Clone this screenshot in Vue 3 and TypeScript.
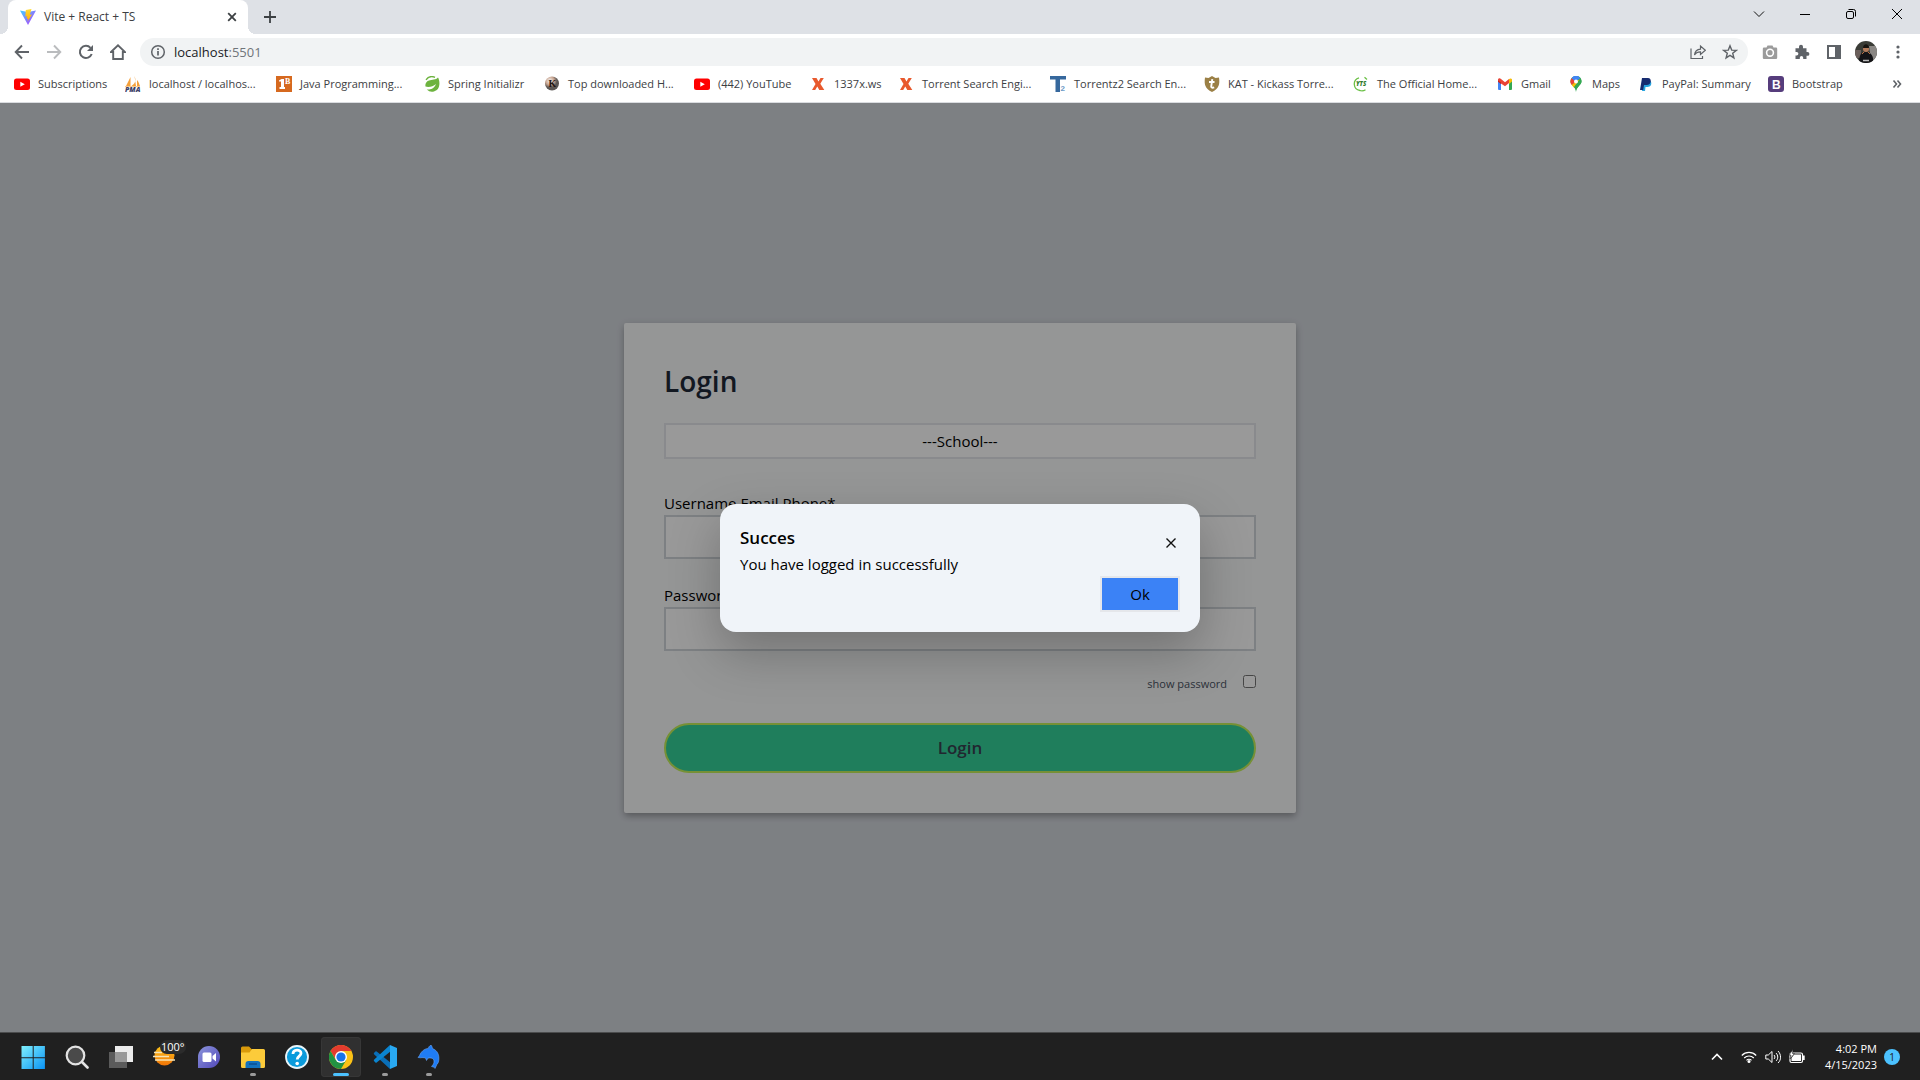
<script setup lang="ts">
import { ref } from 'vue'

interface Bookmark {
  icon: string
  title: string
  width: number
}

const bookmarks: Bookmark[] = [
  { icon: 'youtube', title: 'Subscriptions', width: 71 },
  { icon: 'pma', title: 'localhost / localhos...', width: 111 },
  { icon: 'java', title: 'Java Programming...', width: 108 },
  { icon: 'spring', title: 'Spring Initializr', width: 80 },
  { icon: 'k', title: 'Top downloaded H...', width: 110 },
  { icon: 'youtube', title: '(442) YouTube', width: 76 },
  { icon: 'x', title: '1337x.ws', width: 48 },
  { icon: 'x', title: 'Torrent Search Engi...', width: 112 },
  { icon: 't2', title: 'Torrentz2 Search En...', width: 114 },
  { icon: 'kat', title: 'KAT - Kickass Torre...', width: 109 },
  { icon: 'yts', title: 'The Official Home...', width: 104 },
  { icon: 'gmail', title: 'Gmail', width: 31 },
  { icon: 'maps', title: 'Maps', width: 30 },
  { icon: 'paypal', title: 'PayPal: Summary', width: 90 },
  { icon: 'bootstrap', title: 'Bootstrap', width: 52 },
]

const school = ref('')
const username = ref('')
const password = ref('')
const showPassword = ref(false)
const dialogOpen = ref(true)
</script>

<template>
  <div class="desktop">
    <header class="tabstrip">
      <div class="tab">
        <svg class="i16" viewBox="0 0 16 16">
          <defs>
            <linearGradient id="vite" x1="0" y1="0" x2="1" y2="1"><stop offset="0" stop-color="#41d1ff" /><stop offset="1" stop-color="#bd34fe" /></linearGradient>
            <linearGradient id="bolt" x1="0" y1="0" x2="0" y2="1"><stop offset="0" stop-color="#ffdd35" /><stop offset="1" stop-color="#ffa800" /></linearGradient>
          </defs>
          <path d="M0 1.500 8 3 16 1.500 8 16Z" fill="url(#vite)" />
          <path d="M11.500 0 5.800 1 5.400 7.500 7.200 7.200 6.600 10 8.200 9.600 7.600 12.500 12 5.400 9.800 5.800Z" fill="url(#bolt)" />
        </svg>
        <span class="tab-title">Vite + React + TS</span>
        <button class="plain" aria-label="Close tab">
          <svg class="i16" viewBox="0 0 16 16"><path d="M4.200 4.200 11.800 11.800M11.800 4.200 4.200 11.800" stroke="#3c4043" stroke-width="1.800" /></svg>
        </button>
      </div>
      <button class="plain new-tab" aria-label="New tab">
        <svg class="i16" viewBox="0 0 16 16"><path d="M8 2v12M2 8h12" stroke="#3c4043" stroke-width="1.800" /></svg>
      </button>
      <div class="window-controls">
        <button class="plain" aria-label="Search tabs"><svg class="i16" viewBox="0 0 16 16"><path d="M3 5.500 8 10.500 13 5.500" fill="none" stroke="#111" /></svg></button>
        <button class="plain" aria-label="Minimize"><svg class="i16" viewBox="0 0 16 16"><path d="M3 8.500h10" stroke="#000" /></svg></button>
        <button class="plain" aria-label="Restore"><svg class="i16" viewBox="0 0 16 16"><rect x="3.500" y="5.500" width="7" height="7" rx="1.500" fill="none" stroke="#000" /><path d="M5.500 3.500h5a2 2 0 0 1 2 2v5" fill="none" stroke="#000" /></svg></button>
        <button class="plain" aria-label="Close window"><svg class="i16" viewBox="0 0 16 16"><path d="M3 3 13 13M13 3 3 13" stroke="#000" /></svg></button>
      </div>
    </header>

    <nav class="toolbar">
      <button class="plain tool" aria-label="Back"><svg class="i16" viewBox="0 0 16 16"><path d="M15 8H2M8 1.500 1.700 8 8 14.500" fill="none" stroke="#5f6368" stroke-width="1.900" /></svg></button>
      <button class="plain tool" aria-label="Forward"><svg class="i16" viewBox="0 0 16 16"><path d="M1 8h13M8 1.500 14.300 8 8 14.500" fill="none" stroke="#babcbe" stroke-width="1.900" /></svg></button>
      <button class="plain tool" aria-label="Reload"><svg class="i16" viewBox="0 0 16 16"><path d="M13.700 10A6.100 6.100 0 1 1 12.500 3.800" fill="none" stroke="#5f6368" stroke-width="2" /><path d="M15 1v6H9Z" fill="#5f6368" /></svg></button>
      <button class="plain tool" aria-label="Home"><svg class="i16" viewBox="0 0 16 16"><path d="M1 8 8 1.300 15 8H12.800V15H3.200V8Z" fill="none" stroke="#5f6368" stroke-width="1.900" /></svg></button>
      <div class="omnibox">
        <svg class="i16" viewBox="0 0 16 16"><circle cx="8" cy="8" r="6.300" fill="none" stroke="#5f6368" stroke-width="1.500" /><path d="M8 7v4.500M8 4.200v1.800" stroke="#5f6368" stroke-width="1.700" /></svg>
        <span class="url">localhost<span class="port">:5501</span></span>
        <button class="plain tool" aria-label="Share"><svg class="i16" viewBox="0 0 16 16"><path d="M1 4.500V14.500H12.500V12M4.500 11C5 7 7 5.500 10.500 5.200V2L15.300 6.300 10.500 10.500V7.800C7.500 8 5.500 9 4.500 11Z" fill="none" stroke="#5f6368" stroke-width="1.200" /></svg></button>
        <button class="plain tool" aria-label="Bookmark this page"><svg class="i16" viewBox="0 0 16 16"><path d="M8 1.800 9.700 6.100 14.300 6.400 10.700 9.300 11.900 13.900 8 11.400 4.100 13.900 5.300 9.300 1.700 6.400 6.300 6.100Z" fill="none" stroke="#5f6368" stroke-width="1.400" /></svg></button>
      </div>
      <button class="plain tool" aria-label="Camera extension"><svg class="i16" viewBox="0 0 16 16"><path d="M5.500 1.500h5l1 2h2.500a1.200 1.200 0 0 1 1.200 1.200v9a1.200 1.200 0 0 1-1.200 1.200H2a1.200 1.200 0 0 1-1.200-1.200v-9A1.200 1.200 0 0 1 2 3.500h2.500Z" fill="#9b9b9b" /><circle cx="8" cy="8.700" r="3.400" fill="#9b9b9b" stroke="#fff" stroke-width="1.600" /></svg></button>
      <button class="plain tool" aria-label="Extensions"><svg class="i16" viewBox="0 0 16 16"><path d="M1.500 4.200H5V2.700a2 2 0 0 1 4 0v1.500h3.500V8H13.500a1.900 1.900 0 0 1 0 3.800H12.500V15H9.200V13.800a1.700 1.700 0 0 0-3.400 0V15H1.500V11.500H2.700a1.700 1.700 0 0 0 0-3.400H1.500Z" fill="#5f6368" /></svg></button>
      <button class="plain tool" aria-label="Side panel"><svg class="i16" viewBox="0 0 16 16"><path d="M1 1h14v14H1ZM3 3v10h6V3Z" fill="#5f6368" fill-rule="evenodd" /></svg></button>
      <button class="plain tool" aria-label="Profile">
        <svg class="avatar" viewBox="0 0 22 22"><defs><clipPath id="face"><circle cx="11" cy="11" r="11" /></clipPath></defs><g clip-path="url(#face)"><path d="M0 0h22v22H0Z" fill="#3a3c36" /><path d="M14 5h8v14h-6Z" fill="#8a8784" /><path d="M0 9h6v8H0Z" fill="#6b5f5b" /><path d="M4 22c0-8 2-11 7-11s8 4 7 11Z" fill="#141417" /><circle cx="11" cy="8" r="3" fill="#b47c5b" /><path d="M8 7c0-5 6-5 6 0Z" fill="#17130f" /><path d="M7 13l2-2M15 13l-2-2" stroke="#bd7145" /><path d="M8 19.500h6" stroke="#bbb" stroke-width="1.500" /></g></svg>
      </button>
      <button class="plain tool" aria-label="Menu"><svg class="i16" viewBox="0 0 16 16"><circle cx="8" cy="3" r="1.600" fill="#5f6368" /><circle cx="8" cy="8" r="1.600" fill="#5f6368" /><circle cx="8" cy="13" r="1.600" fill="#5f6368" /></svg></button>
    </nav>

    <nav class="bookmarks">
      <a v-for="(b, n) in bookmarks" :key="n" class="bookmark" href="#">
        <svg class="i16" viewBox="0 0 16 16">
          <template v-if="b.icon === 'youtube'"><rect y="2.500" width="16" height="11.500" rx="2.500" fill="#f00" /><path d="M6.300 5.700 10.800 8.200 6.300 10.700Z" fill="#fff" /></template>
          <template v-else-if="b.icon === 'pma'"><path d="M5.500 1 1 10h4.500ZM9.500 0C11 4 11 7 6.500 10H11ZM12 4c2 2 2 4 3 6h-3Z" fill="#f5a03a" /><path d="M0 10.500h15" stroke="#f9c98d" /><text x="0" y="15.500" class="pma-text">PMA</text></template>
          <template v-else-if="b.icon === 'java'"><rect width="16" height="16" fill="#d6691f" /><path d="M3 4.500 5.500 3H8v8h1v2H3.500v-2H5V5.500H3Z" fill="#fff" /><text x="9" y="8" class="java-text">B</text></template>
          <template v-else-if="b.icon === 'spring'"><path d="M14 1.500C12 4 8 3.500 5 4.600A5 5 0 0 0 1.500 10.500C4 11.500 9 11 12 8 10 13 5.500 14 2.800 13.500A7.300 7.300 0 0 0 15.300 9C15.700 6 15 3 14 1.500Z" fill="#6db33f" /><path d="M2 3.800A7.500 7.500 0 0 1 11 1.300" fill="none" stroke="#6db33f" stroke-width="1.300" /></template>
          <template v-else-if="b.icon === 'k'"><defs><radialGradient id="kball" cx=".35" cy=".3"><stop offset="0" stop-color="#f3f3f3" /><stop offset=".6" stop-color="#c9a590" /><stop offset="1" stop-color="#5b5755" /></radialGradient></defs><circle cx="8" cy="7.500" r="7" fill="url(#kball)" /><text x="4.500" y="11" class="k-text">K</text></template>
          <template v-else-if="b.icon === 'x'"><path d="M2 2h4.500l2 3.500L10.500 2h3.300l-3.500 5.700 4 6.300h-5L7.300 10.500 5.200 14H2l3.500-6Z" fill="#e8592d" /></template>
          <template v-else-if="b.icon === 't2'"><path d="M0 0h16v3.500h-6V16H5.500V3.500H0Z" fill="#36689d" /><rect x="10" y="7" width="6" height="9" fill="#fff" /><text x="10.500" y="15" class="t2-text">2</text></template>
          <template v-else-if="b.icon === 'kat'"><path d="M1 1.500 4.500 2 8 0l3.500 2L15 1.500c1 7 0 11-7 14.500C1 12.500 0 8.500 1 1.500Z" fill="#9b8046" /><path d="M8.300 3.200 7.200 10.500c0 1.300 1 1.500 3 .8M5 6h5.500" fill="none" stroke="#fff" stroke-width="1.900" /></template>
          <template v-else-if="b.icon === 'yts'"><path d="M6 1.800A6.500 6.500 0 0 0 7 14.500c2 .6 4 .2 5.500-.8M11.500 1.300 14 3.500" fill="none" stroke="#6ac045" stroke-width="1.300" /><text x="3" y="10" class="yts-text">YTS</text></template>
          <template v-else-if="b.icon === 'gmail'"><path d="M1 3.500h3V14H2a1 1 0 0 1-1-1Z" fill="#4285f4" /><path d="M12 3.500h3V13a1 1 0 0 1-1 1h-2Z" fill="#34a853" /><path d="M1 4C1 2 3 2 4 3l4 3.200L12 3v4L8 10.200 1 5.500Z" fill="#ea4335" /><path d="M12 3c1.500-1 3-.5 3 1v1.500L12 8Z" fill="#fbbc04" /><path d="M1 4.500 4 6.500V8L1 5.800Z" fill="#c5221f" /></template>
          <template v-else-if="b.icon === 'maps'"><path d="M8 0C4.500 0 2.500 2.700 2.500 5.500 2.500 9 8 11 8 16c0-5 5.500-7 5.500-10.500S11.500 0 8 0Z" fill="#34a853" /><path d="M3.800 2A5.500 5.500 0 0 0 3.700 9L8 5.500Z" fill="#ea4335" /><path d="M3.800 2A5.500 5.500 0 0 1 10.500.6L7 5.500Z" fill="#4285f4" /><path d="M3.700 9 6 11.700 12.500 3 8 5.500Z" fill="#fbbc04" /><path d="M10.500.6C13 2 13.500 4 13.500 5.500 13.500 9 8 11 8 16 8 13 7 12 6 11l6-8Z" fill="#34a853" /><path d="M3.800 2A5.500 5.500 0 0 1 12.300 2L8 5.500Z" fill="#4285f4" /><circle cx="8" cy="5.500" r="2" fill="#fff" /></template>
          <template v-else-if="b.icon === 'paypal'"><path d="M5.500 5h7c2 3 0 6-3 6H7.500L7 15H4Z" fill="#27a4df" /><path d="M4 2h6c4 0 4 7-1.500 7H6l-.8 5H2Z" fill="#172c70" /></template>
          <template v-else><rect width="16" height="16" rx="3" fill="#563d7c" /><text x="4" y="12.500" class="bs-text">B</text></template>
        </svg>
        <span class="bookmark-title" :style="{ width: b.width + 'px' }">{{ b.title }}</span>
      </a>
      <button class="plain more" aria-label="More bookmarks"><svg class="i16" viewBox="0 0 16 16"><path d="M4.500 4.500 7.500 8 4.500 11.500M8.500 4.500 11.500 8 8.500 11.500" fill="none" stroke="#5f6368" stroke-width="1.600" /></svg></button>
    </nav>

    <main class="page">
      <form class="card" @submit.prevent="dialogOpen = true">
        <h1>Login</h1>
        <select v-model="school" class="school" aria-label="School">
          <option value="">---School---</option>
        </select>
        <div class="field">
          <label for="username">Username Email Phone*</label>
          <input id="username" v-model="username" type="text">
        </div>
        <div class="field">
          <label for="password">Password*</label>
          <input id="password" v-model="password" :type="showPassword ? 'text' : 'password'">
        </div>
        <div class="show-row">
          <label for="show">show password</label>
          <input id="show" v-model="showPassword" type="checkbox">
        </div>
        <button class="submit" type="submit">Login</button>
      </form>

      <div v-if="dialogOpen" class="overlay">
        <section class="dialog" role="dialog" aria-labelledby="dialog-title">
          <div class="dialog-head">
            <h2 id="dialog-title">Succes</h2>
            <button class="plain close" aria-label="Close" @click="dialogOpen = false">
              <svg class="i16" viewBox="0 0 16 16"><path d="M3.500 3.500 12.500 12.500M12.500 3.500 3.500 12.500" stroke="#111" stroke-width="1.400" /></svg>
            </button>
          </div>
          <p>You have logged in successfully</p>
          <button class="ok" @click="dialogOpen = false">Ok</button>
        </section>
      </div>
    </main>

    <footer class="taskbar">
      <div class="apps">
        <button class="plain app" aria-label="Start">
          <svg class="i24" viewBox="0 0 24 24"><defs><linearGradient id="win" x1="0" y1="0" x2="1" y2="1"><stop offset="0" stop-color="#7ff0fd" /><stop offset="1" stop-color="#0a93f5" /></linearGradient></defs><path d="M.5 1h11.200v11.200H.5ZM12.700 1h11.200v11.200H12.700ZM.5 13.200h11.200V24H.5ZM12.700 13.200h11.200V24H12.700Z" fill="url(#win)" /></svg>
        </button>
        <button class="plain app" aria-label="Search"><svg class="i24" viewBox="0 0 24 24"><circle cx="10.500" cy="10.500" r="8.800" fill="#4a4a4a" stroke="#e3e3e3" stroke-width="2.200" /><path d="M17 17 22.500 22.500" stroke="#e3e3e3" stroke-width="2.600" stroke-linecap="round" /></svg></button>
        <button class="plain app" aria-label="Task view"><svg class="i24" viewBox="0 0 24 24"><path d="M6 1h18v16H6Z" fill="#ececec" /><path d="M0 7h18v16H0Z" fill="#5b5b5b" /><path d="M6 7h12v10H6Z" fill="#999" /></svg></button>
        <button class="plain app" aria-label="Weather">
          <svg class="i24" viewBox="0 0 24 24"><defs><linearGradient id="sun" x1="0" y1="0" x2="0" y2="1"><stop offset="0" stop-color="#ffc61a" /><stop offset="1" stop-color="#f07407" /></linearGradient></defs><circle cx="11.500" cy="10.500" r="10" fill="url(#sun)" /><path d="M0 11.500h16M2 15h20M1 7.500h8" stroke="#f6e3b5" stroke-width="1.600" /></svg>
          <span class="temp">100°</span>
        </button>
        <button class="plain app" aria-label="Chat"><svg class="i24" viewBox="0 0 24 24"><defs><linearGradient id="chat" x1="0" y1="0" x2="1" y2="1"><stop offset="0" stop-color="#8c95dc" /><stop offset="1" stop-color="#5147b8" /></linearGradient></defs><path d="M12 1A11 11 0 1 1 12 23H1V12A11 11 0 0 1 12 1Z" fill="url(#chat)" /><rect x="5.500" y="7.500" width="9" height="9.500" rx="1.500" fill="#fff" /><path d="M15.500 11 19 8v8.500L15.500 13.500Z" fill="#fff" /></svg></button>
        <button class="plain app running" aria-label="File Explorer"><svg class="i24" viewBox="0 0 24 24"><path d="M0 3a1.500 1.500 0 0 1 1.500-1.500H8L11 4.500V9H0Z" fill="#d99a0b" /><path d="M0 7.500h8.500L11 4h11.500A1.500 1.500 0 0 1 24 5.500v16A1.500 1.500 0 0 1 22.500 23h-21A1.500 1.500 0 0 1 0 21.500Z" fill="#fccb3a" /><path d="M4.500 23v-4a3 3 0 0 1 3-3h9a3 3 0 0 1 3 3v4Z" fill="#1372bd" /><path d="M8 19h8" stroke="#0c4f91" stroke-width="1.500" /></svg></button>
        <button class="plain app" aria-label="Help"><svg class="i24" viewBox="0 0 24 24"><circle cx="12" cy="12" r="11" fill="#0a9bdc" stroke="#e9f5fa" stroke-width="1.800" /><path d="M8 9c0-5 8-5 8-.8 0 3-3.800 2.800-3.800 6.300" fill="none" stroke="#fff" stroke-width="2.800" /><circle cx="12.200" cy="18.500" r="1.800" fill="#fff" /></svg></button>
        <button class="plain app active" aria-label="Chrome"><svg class="i24" viewBox="0 0 24 24"><circle cx="12" cy="12" r="12" fill="#fbc116" /><path d="M12 6h10.400A12 12 0 0 0 1.600 6L7 15Z" fill="#e33b2e" /><path d="M1.600 6A12 12 0 0 0 12 24l5.200-9-10.400 0Z" fill="#229342" /><circle cx="12" cy="12" r="6" fill="#fff" /><circle cx="12" cy="12" r="4.600" fill="#1a73e8" /></svg></button>
        <button class="plain app running" aria-label="Visual Studio Code"><svg class="i24" viewBox="0 0 24 24"><path d="M17 24 1 9.200a1 1 0 0 1 0-1.200L2.400 6.600a1 1 0 0 1 1.300 0L18 18Z" fill="#0a6fb8" /><path d="M17 0 1 14.800a1 1 0 0 0 0 1.200L2.400 17.400a1 1 0 0 0 1.300 0L18 6Z" fill="#0b84cf" /><path d="M17 0 24 3v18l-7 3Z" fill="#29a9f2" /></svg></button>
        <button class="plain app running" aria-label="MySQL tool"><svg class="i24" viewBox="0 0 24 24"><path d="M14 0c.8 1 1.300 2 1.500 3.500 5 2 7.200 6.500 6.200 12.500-.3 1.500-.8 2.500-1.700 3.300L18 23.500l-.8-1.200-2.700-.8 2-2.500c1-2.500.5-4.500-1-5.500-1.500-.8-3.500-.6-4.500-.3L9.500 15.500 8.500 13C6.500 12.500 4.500 12.600 3.500 12.800L1 12.500l1.500-2C4 7 6.500 4 11.500 3.200 11.500 2 12.500.8 14 0Z" fill="#1f7cf5" stroke="#79b3ff" stroke-width=".5" /></svg></button>
      </div>
      <div class="tray">
        <svg class="i16" viewBox="0 0 16 16"><path d="M3 10.500 8 5.500 13 10.500" fill="none" stroke="#fff" stroke-width="1.600" /></svg>
        <div class="status">
          <svg class="i16" viewBox="0 0 16 16"><path d="M.8 6.500a10 10 0 0 1 14.400 0M3.200 9a6.800 6.800 0 0 1 9.600 0M5.500 11.300a3.500 3.500 0 0 1 5 0" fill="none" stroke="#fff" stroke-width="1.200" /><circle cx="8" cy="12.500" r="1.500" fill="#fff" /></svg>
          <svg class="i16" viewBox="0 0 16 16"><path d="M.8 6h2.500L7 2.500v11L3.300 10H.8Z" fill="none" stroke="#fff" /><path d="M9 6c1.200 1.200 1.200 3 0 4M11 4c2.300 2.300 2.300 6 0 8M13 2c3.400 3.500 3.400 9 0 12" fill="none" stroke="#fff" /></svg>
          <svg class="i16" viewBox="0 0 16 16"><rect x="1" y="4" width="12.500" height="9.500" rx="1.500" fill="none" stroke="#fff" stroke-width="1.200" /><path d="M5 5.500h7V12H2.500V9Z" fill="#fff" /><path d="M14.800 6.500v4.500" stroke="#fff" stroke-width="1.800" /><path d="M4 .5 0 6h2l-1 4 4.500-5.500H3.500Z" fill="#fff" stroke="#202020" stroke-width=".6" /></svg>
        </div>
        <div class="clock"><span>4:02 PM</span><span>4/15/2023</span></div>
        <span class="badge">1</span>
      </div>
    </footer>
  </div>
</template>

<style>
body {
  margin: 0;
}
</style>

<style scoped>
* {
  box-sizing: border-box;
}

.desktop {
  min-height: 100vh;
  display: flex;
  flex-direction: column;
  background: #fff;
  font-family: "Open Sans", "Noto Sans", sans-serif;
  font-size: 15px;
  color: #000;
}

svg {
  display: block;
  flex: none;
}

.i16 {
  width: 16px;
  height: 16px;
}

.i24 {
  width: 24px;
  height: 24px;
}

.plain {
  display: flex;
  align-items: center;
  justify-content: center;
  border: 0;
  padding: 0;
  background: none;
  font: inherit;
}

.tabstrip {
  display: flex;
  height: 34px;
  padding-left: 8px;
  background: #dee1e6;
}

.tab {
  position: relative;
  display: flex;
  align-items: center;
  gap: 8px;
  width: 240px;
  padding: 0 8px 0 12px;
  border-radius: 8px 8px 0 0;
  background: #fff;
}

.tab::before,
.tab::after {
  content: "";
  position: absolute;
  bottom: 0;
  width: 8px;
  height: 8px;
}

.tab::before {
  left: -8px;
  background: radial-gradient(circle at 0 0, transparent 8px, #fff 8px);
}

.tab::after {
  right: -8px;
  background: radial-gradient(circle at 100% 0, transparent 8px, #fff 8px);
}

.tab-title {
  flex: 1;
  padding-bottom: 2px;
  font-size: 12px;
  color: #3c4043;
}

.new-tab {
  margin-left: 14px;
}

.window-controls {
  display: flex;
  height: 28px;
  margin-left: auto;
}

.window-controls .plain {
  width: 46px;
}

.toolbar {
  display: flex;
  align-items: center;
  height: 36px;
  padding: 0 6px;
}

.tool {
  width: 32px;
  height: 28px;
}

.avatar {
  width: 22px;
  height: 22px;
}

.omnibox {
  display: flex;
  align-items: center;
  flex: 1;
  height: 28px;
  margin: 0 6px;
  padding: 0 2px 0 10px;
  border-radius: 14px;
  background: #f1f3f4;
}

.url {
  flex: 1;
  margin-left: 8px;
  font-size: 13px;
  color: #202124;
}

.port {
  color: #70757a;
}

.bookmarks {
  display: flex;
  align-items: center;
  gap: 16px;
  height: 33px;
  padding: 0 15px 4px 14px;
  border-bottom: 1px solid #dadce0;
}

.bookmark {
  display: flex;
  align-items: center;
  gap: 8px;
  color: #3c4043;
  font-size: 11px;
  text-decoration: none;
}

.bookmark-title {
  padding-bottom: 2px;
  white-space: nowrap;
}

.more {
  margin-left: auto;
}

.pma-text {
  font: italic 800 7px "Open Sans", sans-serif;
  fill: #3c3f67;
}

.java-text {
  font: 700 8px "Liberation Serif", serif;
  fill: #fff;
}

.k-text {
  font: 700 10px "Liberation Serif", serif;
  fill: #221512;
}

.t2-text {
  font: 700 8px "Liberation Sans", sans-serif;
  fill: #6c9ac6;
}

.yts-text {
  font: italic 800 6px "Open Sans", sans-serif;
  fill: #2f7c2c;
}

.bs-text {
  font: 700 12px "Liberation Sans", sans-serif;
  fill: #fff;
}

.page {
  position: relative;
  flex: 1;
  display: flex;
  align-items: center;
  justify-content: center;
  background: #d1d5db;
}

.card {
  display: flex;
  flex-direction: column;
  width: 100%;
  max-width: 672px;
  padding: 40px;
  border-radius: 2px;
  background: #f9fafb;
  box-shadow: 0 4px 6px -1px rgba(0, 0, 0, 0.2), 0 2px 8px rgba(0, 0, 0, 0.15);
}

h1 {
  margin: 0 0 24px;
  font-size: 28px;
  font-weight: 600;
  line-height: 36px;
  color: #1f2937;
}

.school {
  appearance: none;
  height: 36px;
  margin-bottom: 32px;
  border: 2px solid #e5e7eb;
  border-radius: 0;
  background: #fff;
  font: inherit;
  color: #000;
  text-align: center;
  text-align-last: center;
}

.field {
  display: flex;
  flex-direction: column;
  margin-bottom: 24px;
  line-height: 24px;
}

.field input {
  height: 44px;
  padding: 8px;
  border: 2px solid #d1d5db;
  border-radius: 0;
  background: #fff;
  font: inherit;
  text-align: center;
}

.show-row {
  display: flex;
  align-items: flex-start;
  justify-content: flex-end;
  gap: 16px;
  margin-bottom: 32px;
  font-size: 11px;
  line-height: 18px;
  height: 16px;
  color: #4b5563;
}

.show-row input {
  width: 13px;
  height: 13px;
  margin: 0;
}

.submit {
  height: 50px;
  border: 2px solid #c5f05a;
  border-radius: 25px;
  background: #34d399;
  font: inherit;
  font-size: 17px;
  font-weight: 600;
  color: #374151;
}

.overlay {
  position: absolute;
  inset: 0;
  display: flex;
  align-items: center;
  justify-content: center;
  background: rgba(0, 0, 0, 0.4);
}

.dialog {
  display: flex;
  flex-direction: column;
  width: 480px;
  padding: 20px;
  border-radius: 16px;
  background: #f0f4f9;
  box-shadow: 0 20px 50px rgba(0, 0, 0, 0.25);
}

.dialog-head {
  display: flex;
  align-items: flex-end;
  justify-content: space-between;
}

h2 {
  margin: 0;
  font-size: 17px;
  font-weight: 600;
  line-height: 28px;
}

.close {
  width: 18px;
  height: 18px;
}

.dialog p {
  margin: 0;
  line-height: 24px;
}

.ok {
  align-self: flex-end;
  width: 80px;
  height: 36px;
  border: 2px solid #e5e7eb;
  background: #3b82f6;
  font: inherit;
  color: #000;
}

.taskbar {
  display: flex;
  align-items: center;
  justify-content: space-between;
  height: 48px;
  padding: 0 20px 0 13px;
  border-top: 1px solid #4b4c4d;
  background: #202020;
  color: #fff;
}

.apps {
  display: flex;
  gap: 4px;
}

.app {
  position: relative;
  width: 40px;
  height: 40px;
  border-radius: 4px;
}

.app.active {
  background: #303030;
  box-shadow: inset 0 0 0 1px #373737;
}

.running::after,
.active::after {
  content: "";
  position: absolute;
  bottom: 1px;
  width: 6px;
  height: 3px;
  border-radius: 2px;
  background: #9b9b9b;
}

.active::after {
  width: 16px;
  background: #4cc2ff;
}

.temp {
  position: absolute;
  top: 3px;
  left: 15px;
  padding: 0 1px;
  border-radius: 8px;
  background: #2b2b2b;
  font-size: 11px;
  line-height: 14px;
  color: #fff;
}

.tray {
  display: flex;
  align-items: center;
}

.status {
  display: flex;
  gap: 8px;
  margin-left: 16px;
}

.clock {
  display: flex;
  flex-direction: column;
  width: 64px;
  margin: 0 7px 0 8px;
  font-size: 11px;
  line-height: 16px;
  text-align: right;
}

.badge {
  width: 16px;
  height: 16px;
  border-radius: 8px;
  background: #4cc2ff;
  font-size: 10px;
  line-height: 16px;
  text-align: center;
  color: #202020;
}
</style>
